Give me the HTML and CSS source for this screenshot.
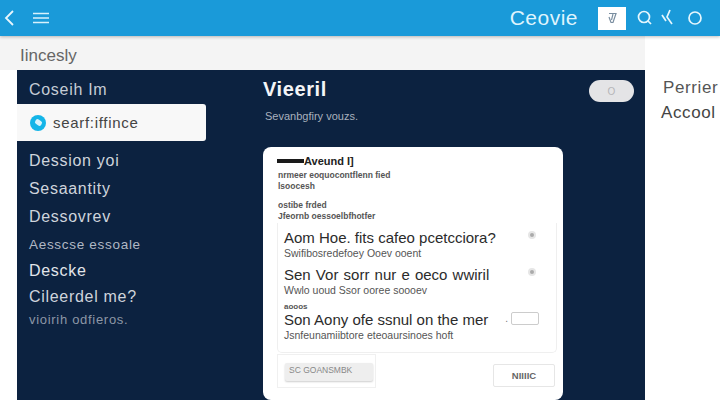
FILE: index.html
```html
<!DOCTYPE html>
<html lang="en">
<head>
<meta charset="utf-8">
<title>Ceovie</title>
<link rel="stylesheet" href="styles.css">
</head>
<body>
<header class="topbar">
  <div class="topbar-left">
    <svg class="icon-back" viewBox="0 0 14 18" width="14" height="18"><path d="M11 2 L4 9 L11 16" /></svg>
    <svg class="icon-menu" viewBox="0 0 18 12" width="18" height="12"><path d="M1 1.5H17M1 6H17M1 10.5H17" /></svg>
  </div>
  <div class="topbar-right">
    <span class="brand">Ceovie</span>
    <span class="edit-box"><svg viewBox="0 0 14 14" width="14" height="14"><path d="M4 2.5H11L8 11.5H6L4 6" /><path d="M8 3L6.5 9" /></svg></span>
    <svg class="icon-tb icon-search" viewBox="0 0 18 18" width="18" height="18"><circle cx="8" cy="8" r="5.5" /><path d="M12 12L15 15" /></svg>
    <svg class="icon-tb icon-tool" viewBox="0 0 16 18" width="16" height="18"><path d="M10 1L7 8L12 15M2 6L6 12" /></svg>
    <svg class="icon-tb icon-circle" viewBox="0 0 18 18" width="18" height="18"><circle cx="9" cy="9" r="6" /></svg>
  </div>
</header>
<div class="workspace">
  <div class="left-col">
    <div class="strip">Iincesly</div>
    <section class="panel">
      <nav class="sidebar">
        <div class="side-head">Coseih Im</div>
        <div class="side-active"><span class="dot"></span><span>searf:iffince</span></div>
        <ul class="side-list">
          <li class="h28">Dession yoi</li>
          <li class="h28">Sesaantity</li>
          <li class="h28">Dessovrev</li>
          <li class="h26 small">Aesscse essoale</li>
          <li class="h26 bright">Descke</li>
          <li class="h26">Cileerdel me?</li>
          <li class="h18 tiny">vioirih odfieros.</li>
        </ul>
      </nav>
      <main class="content">
        <div class="content-head">
          <div>
            <h1 class="view-title">Vieeril</h1>
            <p class="view-sub">Sevanbgfiry vouzs.</p>
          </div>
          <span class="pill">O</span>
        </div>
        <div class="card">
          <div class="card-title"><span class="bar"></span><span>Aveund I]</span></div>
          <p class="micro">nrmeer eoquocontflenn fied</p>
          <p class="micro">lsoocesh</p>
          <p class="micro gap-top">ostibe frded</p>
          <p class="micro">Jfeornb oessoelbfhotfer</p>
          <div class="inner">
            <div class="row">
              <div>
                <div class="q">Aom Hoe. fits cafeo pcetcciora?</div>
                <div class="a">Swifibosredefoey Ooev ooent</div>
              </div>
              <span class="radio"></span>
            </div>
            <div class="row row-short">
              <div>
                <div class="q q-wide">Sen Vor sorr nur e oeco wwiril</div>
                <div class="a">Wwlo uoud Ssor ooree soooev</div>
              </div>
              <span class="radio"></span>
            </div>
            <div class="mini-label">aooos</div>
            <div class="row">
              <div>
                <div class="q">Son Aony ofe ssnul on the mer</div>
                <div class="a">Jsnfeunamiibtore eteoaursinoes hoft</div>
              </div>
              <span class="mark">.</span>
              <span class="box"></span>
            </div>
          </div>
          <div class="card-foot">
            <div class="foot-left"><span class="ghost-btn">SC GOANSMBK</span></div>
            <span class="next-btn">NIIIIC</span>
          </div>
        </div>
      </main>
    </section>
  </div>
  <aside class="aside">
    <div class="aside-one">Perrier</div>
    <div class="aside-two">Accool</div>
  </aside>
</div>
</body>
</html>
```
FILE: styles.css
```css
* { box-sizing: border-box; }
html, body { margin: 0; padding: 0; }
body {
  width: 720px;
  height: 400px;
  overflow: hidden;
  background: #fff;
  font-family: "Liberation Sans", Arial, sans-serif;
  color: #333;
}
.topbar {
  height: 36px;
  background: #1a9ad9;
  box-shadow: 0 1px 3px rgba(0,0,0,.25);
  display: flex;
  justify-content: space-between;
  align-items: center;
  position: relative;
}
.topbar-left { display: flex; align-items: center; padding-left: 2px; gap: 16px; }
.icon-back path { fill: none; stroke: #e8f6fd; stroke-width: 1.8; }
.icon-menu path { fill: none; stroke: #d9f1fc; stroke-width: 1.6; }
.topbar-right { display: flex; align-items: center; padding-right: 16px; }
.brand { font-size: 21px; letter-spacing: .5px; color: #dff4fd; margin-right: 20px; }
.edit-box {
  width: 28px; height: 23px; background: #fff;
  display: flex; align-items: center; justify-content: center;
  margin-right: 10px;
}
.edit-box path { fill: none; stroke: #7a8ea0; stroke-width: 1.2; }
.icon-tb { fill: none; stroke: #e5f6fd; stroke-width: 1.7; }
.icon-search { margin-right: 6px; }
.icon-tool { margin-right: 10px; }
.workspace { display: flex; height: 364px; }
.left-col { width: 645px; flex: none; }
.strip {
  height: 34px; background: #f4f4f4; padding: 10px 0 0 20px;
  font-size: 17px; color: #666; line-height: 20px;
}
.panel {
  margin-left: 17px; width: 628px; height: 330px;
  background: #0c2240; display: flex; overflow: hidden;
}
.sidebar { width: 246px; flex: none; color: #cfd4dc; letter-spacing: .7px; }
.side-head { padding: 10px 0 0 12px; height: 34px; font-size: 16px; line-height: 20px; color: #c5ccd5; }
.side-active {
  width: 189px; height: 37px; background: #f8f8f8; border-radius: 0 3px 3px 0;
  display: flex; align-items: center; padding-left: 13px; gap: 7px;
  font-size: 15px; color: #444;
}
.dot { width: 16px; height: 16px; border-radius: 50%; background: #14b5e8; display: block; position: relative; }
.dot::after {
  content: ""; position: absolute; left: 5px; top: 5px; width: 7px; height: 5px;
  background: #d8f3fc; border-radius: 2px; transform: rotate(35deg);
}
.side-list { list-style: none; margin: 6px 0 0; padding: 0 0 0 12px; font-size: 16px; }
.side-list li { display: flex; align-items: center; }
.h28 { height: 28px; }
.h26 { height: 26.5px; }
.h18 { height: 17px; }
.small { font-size: 13.5px; color: #b0b8c4; }
.bright { color: #e2e5ea; }
.tiny { font-size: 13px; color: #8d97a6; }
.content { flex: 1; padding-right: 11px; display: flex; flex-direction: column; }
.content-head { display: flex; justify-content: space-between; padding-top: 7px; height: 77px; flex: none; }
.view-title { margin: 0; font-size: 20px; line-height: 24px; font-weight: 700; color: #f4f5f7; letter-spacing: .6px; }
.view-sub { margin: 8px 0 0; padding-left: 2px; font-size: 11px; line-height: 14px; color: #a9b1bd; }
.pill {
  width: 45px; height: 22px; margin-top: 3px; border-radius: 11px; background: #e4e4e6;
  color: #b5b5b8; font-size: 10px; display: flex; align-items: center; justify-content: center;
}
.card {
  width: 300px; height: 253px; flex: none; background: #fff; border-radius: 8px;
  padding: 9px 6px 0 14px;
  display: flex; flex-direction: column; color: #222;
}
.card-title { display: flex; align-items: center; height: 10px; font-size: 11px; font-weight: 700; color: #222; }
.bar { width: 27px; height: 4px; background: #1a1a1a; }
.micro { margin: 0; padding-left: 1px; font-size: 8.5px; line-height: 11px; font-weight: 700; color: #555; }
.micro:nth-of-type(1) { margin-top: 4px; }
.gap-top { margin-top: 8px; }
.inner {
  margin-top: 1px; width: 280px; height: 130px; border: 1px solid #efefef; border-top: 0;
  border-radius: 0 0 5px 5px; padding: 5px 8px 0 6px; flex: none;
}
.row { display: flex; align-items: flex-start; height: 37px; position: relative; }
.row-short { height: 36px; }
.row > div { flex: 1; }
.q { font-size: 15px; line-height: 19px; color: #2b2b2b; white-space: nowrap; }
.q-wide { word-spacing: 1px; }
.a { font-size: 10.5px; line-height: 13px; color: #555; white-space: nowrap; }
.radio { width: 8px; height: 8px; border-radius: 50%; background: #aaa; border: 2px solid #e6e6e6; margin: 3px 12px 0 0; flex: none; }
.mini-label { font-size: 8px; font-weight: 700; height: 9px; line-height: 12px; color: #555; }
.mark { font-size: 10px; color: #777; margin: 3px 3px 0 0; }
.box { width: 28px; height: 13px; border: 1px solid #ccc; border-radius: 2px; margin: 2px 9px 0 0; flex: none; }
.card-foot { display: flex; justify-content: space-between; align-items: flex-start; width: 278px; margin-top: 1px; }
.foot-left { width: 99px; height: 34px; border: 1px solid #f0f0f0; padding: 8px 0 0 7px; }
.ghost-btn {
  display: block; width: 88px; height: 18px; background: #eee; border-radius: 2px;
  box-shadow: 0 1px 2px rgba(0,0,0,.2); font-size: 8.5px; line-height: 15px; padding-left: 4px; color: #888;
}
.next-btn {
  width: 62px; height: 23px; margin-top: 10px; border: 1px solid #e6e6e6; border-radius: 2px;
  font-size: 9.5px; font-weight: 700; color: #666; display: flex; align-items: center; justify-content: center;
}
.aside { padding: 43px 0 0 16px; font-size: 17px; letter-spacing: .6px; color: #555; white-space: nowrap; overflow: hidden; flex: 1; }
.aside-one { line-height: 18px; padding-left: 2px; }
.aside-two { line-height: 18px; margin-top: 7px; color: #444; }
```
